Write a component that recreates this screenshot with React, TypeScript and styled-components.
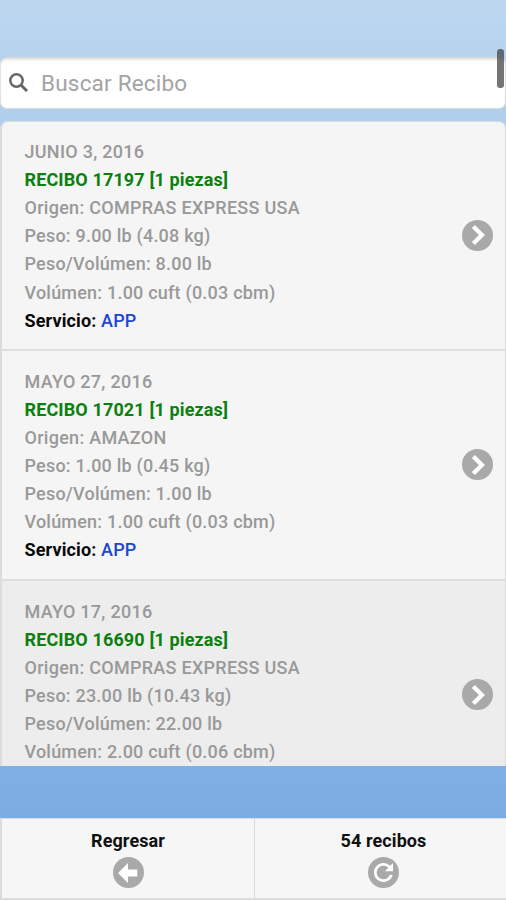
import React from "react";
import styled, { createGlobalStyle } from "styled-components";

const GlobalStyle = createGlobalStyle`
  * { box-sizing: border-box; }
  body { margin: 0; font-family: Roboto, "Liberation Sans", sans-serif; }
`;

const Screen = styled.div`
  position: relative;
  display: flex;
  flex-direction: column;
  height: 900px;
  overflow: hidden;
  background: linear-gradient(#bdd7f0 0, #b0cfec 120px, #7eb0e3 765px, #7cade1 818px);
`;

const SearchField = styled.label`
  display: flex;
  flex: none;
  align-items: center;
  gap: 13px;
  height: 52px;
  margin-top: 56.5px;
  padding: 0 9px 1px 8px;
  background: #fff;
  border: 1px solid #d9dcdf;
  border-top: 2px solid #dadada;
  border-left-color: #e3e3e3;
  border-radius: 7px;
  box-shadow: inset 0 2px 2px #f1f1ed;
`;

const SearchInput = styled.input`
  flex: 1;
  min-width: 0;
  padding: 0;
  border: 0;
  outline: 0;
  background: transparent;
  font: 400 22.5px Roboto, sans-serif;
  letter-spacing: 0.2px;
  &::placeholder { color: #a3a3a3; opacity: 1; }
`;

const List = styled.ul`
  flex: none;
  height: 645px;
  margin: 12px 0 0;
  padding: 0;
  overflow: hidden;
  list-style: none;
  border: solid #dcdcdc;
  border-width: 1px 1px 0 2px;
  border-radius: 7px 7px 0 0;
`;

const Receipt = styled.li<{ $pressed?: boolean }>`
  display: flex;
  align-items: flex-start;
  justify-content: space-between;
  height: 229.8px;
  padding: 0 12px 0 22.5px;
  background: ${(p) => (p.$pressed ? "#ededed" : "#f5f5f5")};
  border-bottom: 2px solid #dfdfdf;
`;

const Lines = styled.div`
  display: flex;
  flex-direction: column;
  padding-top: 16.6px;
`;

const Line = styled.div<{ $tone?: "green" | "black"; $tight?: boolean }>`
  height: 28.1px;
  line-height: 28px;
  font-size: 18px;
  font-weight: ${(p) => (p.$tone ? 700 : 500)};
  letter-spacing: ${(p) => (p.$tone ? 0.13 : p.$tight ? 0.21 : 0.28)}px;
  white-space: nowrap;
  color: ${(p) => (p.$tone === "green" ? "#0b800f" : p.$tone === "black" ? "#080808" : "#999")};
`;

const Service = styled.span`
  font-weight: 500;
  color: #2146cc;
`;

const Disc = styled.span`
  display: flex;
  flex: none;
  align-items: center;
  justify-content: center;
  width: 31px;
  height: 31px;
  border-radius: 50%;
  background: #a9a9a9;
`;

const RowDisc = styled(Disc)`
  margin-top: 98px;
  padding-right: 2px;
`;

const Footer = styled.nav`
  display: grid;
  grid-template-columns: 252px 1fr;
  flex: none;
  height: 82px;
  margin-top: auto;
  background: #f6f6f6;
  border: solid #dcdcdc;
  border-width: 1px 0 2px 2px;
`;

const FooterButton = styled.button`
  display: flex;
  flex-direction: column;
  align-items: center;
  gap: 5px;
  padding: 11px 0 0;
  border: 0;
  background: transparent;
  font: 700 18px/22px Roboto, sans-serif;
  letter-spacing: 0.1px;
  color: #101010;
  & + & {
    padding-left: 6px;
    border-left: 1px solid #d8d8d8;
  }
`;

const ScrollThumb = styled.div`
  position: absolute;
  top: 49px;
  right: 2px;
  width: 7px;
  height: 39px;
  border-radius: 3px;
  background: rgba(70, 70, 70, 0.75);
`;

const icons = {
  carat: "M3.404 2.051 8.354 7 3.404 11.95 5.525 14.07 12.596 7 5.525 -.071z",
  back: "M7 4.5V0L0 7l7 7V9.5h6.5v-5z",
  refresh:
    "M11.62 8.7A5 5 0 0 1 7 12 5 5 0 1 1 10.53 3.47L8 6h6V0l-2.05 2.05A7 7 0 1 0 13.76 8.79z",
};

const Glyph = ({ name, size = 20 }: { name: keyof typeof icons; size?: number }) => (
  <svg width={size} height={size} viewBox="0 0 14 14" overflow="visible" aria-hidden>
    <path d={icons[name]} fill="#fff" />
  </svg>
);

const receipts = [
  { date: "JUNIO 3, 2016", id: 17197, origin: "COMPRAS EXPRESS USA", weight: "9.00 lb (4.08 kg)", dim: "8.00 lb", volume: "1.00 cuft (0.03 cbm)", service: "APP" },
  { date: "MAYO 27, 2016", id: 17021, origin: "AMAZON", weight: "1.00 lb (0.45 kg)", dim: "1.00 lb", volume: "1.00 cuft (0.03 cbm)", service: "APP" },
  { date: "MAYO 17, 2016", id: 16690, origin: "COMPRAS EXPRESS USA", weight: "23.00 lb (10.43 kg)", dim: "22.00 lb", volume: "2.00 cuft (0.06 cbm)", pressed: true },
];

export default function App() {
  return (
    <Screen>
      <GlobalStyle />
      <SearchField>
        <svg width="19" height="19" viewBox="0 0 19 19" fill="none" stroke="#666" aria-hidden>
          <circle cx="7.5" cy="7.5" r="6.2" strokeWidth="2.5" />
          <path d="m12 12 6 6" strokeWidth="3" />
        </svg>
        <SearchInput placeholder="Buscar Recibo" />
      </SearchField>
      <List>
        {receipts.map((r) => (
          <Receipt key={r.id} $pressed={r.pressed}>
            <Lines>
              <Line>{r.date}</Line>
              <Line $tone="green">RECIBO {r.id} [1 piezas]</Line>
              <Line>Origen: {r.origin}</Line>
              <Line $tight>Peso: {r.weight}</Line>
              <Line $tight>Peso/Volúmen: {r.dim}</Line>
              <Line $tight>Volúmen: {r.volume}</Line>
              {r.service && (
                <Line $tone="black">
                  Servicio: <Service>{r.service}</Service>
                </Line>
              )}
            </Lines>
            <RowDisc>
              <Glyph name="carat" />
            </RowDisc>
          </Receipt>
        ))}
      </List>
      <Footer>
        <FooterButton>
          Regresar
          <Disc>
            <Glyph name="back" />
          </Disc>
        </FooterButton>
        <FooterButton>
          54 recibos
          <Disc>
            <Glyph name="refresh" size={19} />
          </Disc>
        </FooterButton>
      </Footer>
      <ScrollThumb />
    </Screen>
  );
}
